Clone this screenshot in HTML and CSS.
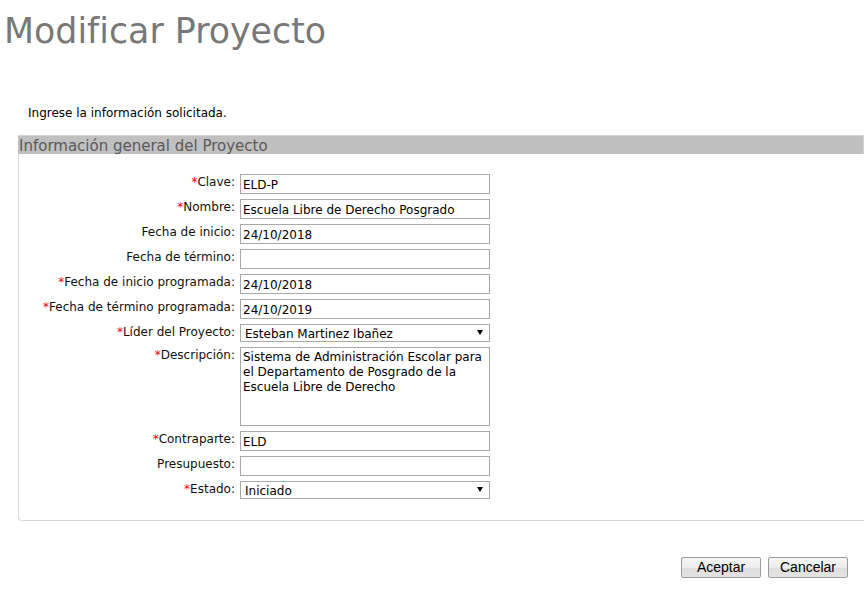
FILE: index.html
```html
<!DOCTYPE html>
<html lang="es">
<head>
<meta charset="utf-8">
<title>Modificar Proyecto</title>
<link rel="stylesheet" href="styles.css">
</head>
<body>
<div class="page">
  <h1 class="title">Modificar Proyecto</h1>
  <p class="intro">Ingrese la información solicitada.</p>

  <div class="panel">
    <div class="panel-head">Información general del Proyecto</div>
    <div class="panel-body">
      <div class="form">
        <label class="lbl"><span class="req">*</span>Clave:</label>
        <input class="field" type="text" value="ELD-P">

        <label class="lbl"><span class="req">*</span>Nombre:</label>
        <input class="field" type="text" value="Escuela Libre de Derecho Posgrado">

        <label class="lbl">Fecha de inicio:</label>
        <input class="field" type="text" value="24/10/2018">

        <label class="lbl">Fecha de término:</label>
        <input class="field" type="text" value="">

        <label class="lbl"><span class="req">*</span>Fecha de inicio programada:</label>
        <input class="field" type="text" value="24/10/2018">

        <label class="lbl"><span class="req">*</span>Fecha de término programada:</label>
        <input class="field" type="text" value="24/10/2019">

        <label class="lbl"><span class="req">*</span>Líder del Proyecto:</label>
        <span class="select-wrap">
          <select class="select"><option>Esteban Martinez Ibañez</option></select>
          <span class="arrow"></span>
        </span>

        <label class="lbl"><span class="req">*</span>Descripción:</label>
        <textarea class="area" wrap="off">Sistema de Administración Escolar para
el Departamento de Posgrado de la
Escuela Libre de Derecho</textarea>

        <label class="lbl"><span class="req">*</span>Contraparte:</label>
        <input class="field" type="text" value="ELD">

        <label class="lbl">Presupuesto:</label>
        <input class="field" type="text" value="">

        <label class="lbl"><span class="req">*</span>Estado:</label>
        <span class="select-wrap">
          <select class="select"><option>Iniciado</option></select>
          <span class="arrow"></span>
        </span>
      </div>
    </div>
  </div>

  <div class="actions">
    <button class="btn btn-ok" type="button">Aceptar</button>
    <button class="btn btn-cancel" type="button">Cancelar</button>
  </div>
</div>
</body>
</html>
```

FILE: styles.css
```css
html, body {
  margin: 0;
  padding: 0;
  background: #fff;
  overflow: hidden;
}

body {
  font-family: "DejaVu Sans", Verdana, sans-serif;
  font-size: 12px;
  color: #111;
}

.page {
  width: 867px;
}

.title {
  margin: 0;
  padding: 11px 0 0 4px;
  font-size: 34.8px;
  font-weight: normal;
  line-height: 40px;
  color: #787878;
}

.intro {
  margin: 55px 0 0 28px;
  line-height: 15px;
  color: #000;
}

.panel {
  margin: 14px 0 0 18px;
  width: 846px;
}

.panel-head {
  box-sizing: border-box;
  height: 19px;
  background: #c0c0c0;
  border-top: 1px solid #d3d3d3;
  border-right: 1px solid #d3d3d3;
  padding: 2px 0 0 1px;
  font-size: 15px;
  line-height: 16px;
  color: #5a5a5a;
  white-space: nowrap;
  overflow: hidden;
}

.panel-body {
  border-left: 1px solid #d6d6d6;
  border-bottom: 1px solid #d6d6d6;
  border-bottom-left-radius: 4px;
  padding: 20px 0 21px 0;
}

.form {
  display: grid;
  grid-template-columns: 216px 250px;
  column-gap: 5px;
  row-gap: 5px;
  align-items: start;
}

.lbl {
  text-align: right;
  line-height: 15px;
  padding-top: 1px;
  color: #111;
  white-space: nowrap;
}

.req {
  color: #f00;
}

.field {
  box-sizing: border-box;
  width: 250px;
  height: 20px;
  margin: 0;
  padding: 1px 2px 0 2px;
  border: 1px solid #a9a9a9;
  border-radius: 0;
  font-family: "DejaVu Sans", Verdana, sans-serif;
  font-size: 12px;
  color: #000;
  background: #fff;
  outline: none;
}

.select-wrap {
  position: relative;
  display: block;
  width: 250px;
  height: 18px;
}

.select {
  box-sizing: border-box;
  display: block;
  width: 250px;
  height: 18px;
  margin: 0;
  padding: 2px 16px 0 4px;
  border: 1px solid #a9a9a9;
  border-radius: 0;
  background: #fff;
  font-family: "DejaVu Sans", Verdana, sans-serif;
  font-size: 12px;
  line-height: 14px;
  color: #000;
  -webkit-appearance: none;
  appearance: none;
  outline: none;
}

.arrow {
  position: absolute;
  right: 7px;
  top: 6px;
  width: 0;
  height: 0;
  border-left: 3px solid transparent;
  border-right: 3px solid transparent;
  border-top: 5px solid #000;
  pointer-events: none;
}

.area {
  box-sizing: border-box;
  display: block;
  width: 250px;
  height: 79px;
  margin: 0;
  padding: 2px 2px;
  border: 1px solid #a9a9a9;
  border-radius: 0;
  font-family: "DejaVu Sans", Verdana, sans-serif;
  font-size: 12px;
  line-height: 15px;
  color: #000;
  resize: none;
  overflow: hidden;
  white-space: pre;
  outline: none;
}

.actions {
  display: flex;
  justify-content: flex-end;
  gap: 7px;
  margin-top: 36px;
  padding-right: 19px;
}

.btn {
  box-sizing: border-box;
  height: 21px;
  margin: 0;
  padding: 0;
  border: 1px solid #9c9c9c;
  border-radius: 2px;
  background: linear-gradient(#f6f6f6 0%, #ececec 50%, #dedede 51%, #e3e3e3 100%);
  font-family: "Liberation Sans", Arial, sans-serif;
  font-size: 14px;
  line-height: 19px;
  color: #000;
}

.btn-ok {
  width: 80px;
}

.btn-cancel {
  width: 80px;
}
```
